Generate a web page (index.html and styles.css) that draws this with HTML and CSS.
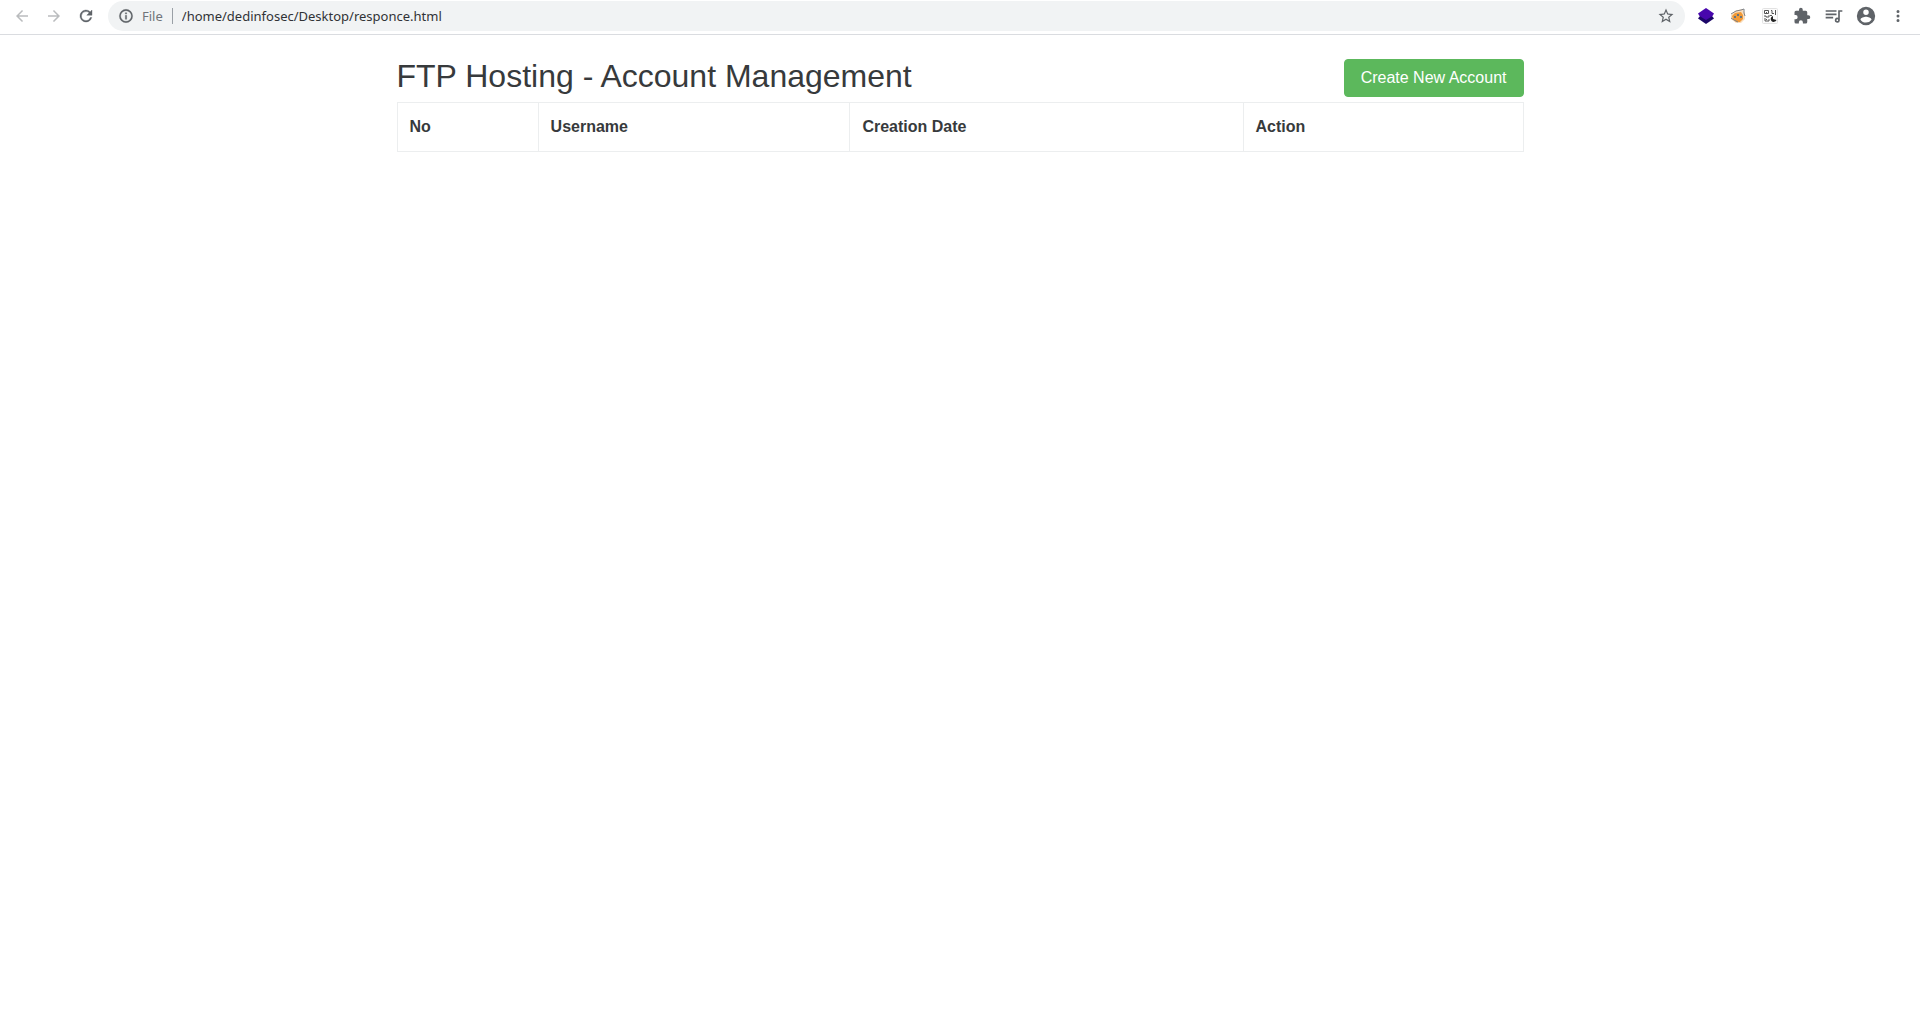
FILE: index.html
```html
<!DOCTYPE html>
<html lang="en">
<head>
<meta charset="utf-8">
<title>FTP Hosting - Account Management</title>
<link rel="stylesheet" href="styles.css">
</head>
<body>
<header class="toolbar">
  <nav class="nav-buttons" aria-label="Navigation">
    <button class="icon-button faded" type="button" aria-label="Back"><svg viewBox="0 0 24 24"><path d="M20 11H7.83l5.59-5.59L12 4l-8 8 8 8 1.41-1.41L7.83 13H20z"/></svg></button>
    <button class="icon-button faded" type="button" aria-label="Forward"><svg viewBox="0 0 24 24"><path d="M12 4l-1.41 1.41L16.17 11H4v2h12.17l-5.58 5.59L12 20l8-8z"/></svg></button>
    <button class="icon-button" type="button" aria-label="Reload"><svg viewBox="0 0 24 24"><path d="M17.65 6.35A8 8 0 1 0 19.73 14h-2.08A6 6 0 1 1 12 6c1.66 0 3.14.69 4.22 1.78L13 11h7V4z" stroke="#5f6368" stroke-width=".5"/></svg></button>
  </nav>
  <form class="omnibox">
    <svg class="info" viewBox="0 0 24 24"><path stroke="#5f6368" stroke-width=".5" d="M11 17h2v-6h-2zm1-15a10 10 0 1 0 0 20 10 10 0 0 0 0-20zm0 18a8 8 0 1 1 0-16 8 8 0 0 1 0 16zM11 9h2V7h-2z"/></svg>
    <label class="scheme" for="address">File</label>
    <input class="address" id="address" type="text" value="/home/dedinfosec/Desktop/responce.html" spellcheck="false">
    <button class="icon-button" type="button" aria-label="Bookmark"><svg viewBox="0 0 24 24"><path d="M22 9.24l-7.19-.62L12 2 9.19 8.63 2 9.24l5.46 4.73L5.82 21 12 17.27 18.18 21l-1.63-7.03zM12 15.4l-3.76 2.27 1-4.28-3.32-2.88 4.38-.38L12 6.1l1.71 4.04 4.38.38-3.32 2.88 1 4.28z"/></svg></button>
  </form>
  <div class="extensions">
    <button class="icon-button" type="button" aria-label="Layers extension"><svg viewBox="0 0 18 18"><path fill="#1c0668" d="M1 11.500l2-2.500h12l2 2.500L9 17z"/><path fill="#4806ad" d="M1 6.500L9 1l8 5.500L15.500 9 9 13 2.500 9z"/></svg></button>
    <button class="icon-button" type="button" aria-label="Proxy extension"><svg viewBox="0 0 18 18"><path fill="#f8ddbd" d="M2 8l4-4 7-2 3 4v6l-4 4H7l-5-4z"/><path fill="#f39a36" d="M3 9l3-3 6-1 2 3v4l-3 3H7l-3-3z"/><path fill="none" stroke="#7f8286" d="M2 7l5-3 5-1 3-1v4l1 3M2 11l3 2 4 2"/><path fill="#69747b" d="M8 7h2v2H8zM5 9h2v2H5zM11 9h2v2h-2z"/></svg></button>
    <button class="icon-button" type="button" aria-label="QR code extension"><svg viewBox="0 0 18 18"><rect x="1.500" y="1.500" width="15" height="15" rx="1" fill="#fbfbfb" stroke="#e2e2e2"/><path fill="none" stroke="#555" d="M3.500 3.500h4v3h-4zM10 3.500h1v3h2M14.500 3v5M3 9h2v1h3V8M4 11v3h4v-2"/><path fill="#555" d="M5 12h1v1H5zM5 5h1v1H5zM9 8h2v1H9z"/><path fill="#222" d="M12 9a3 3 0 1 0 3.500 4L12 12z"/></svg></button>
    <button class="icon-button" type="button" aria-label="Extensions"><svg viewBox="0 0 24 24"><path d="M20.500 11H19V7a2 2 0 0 0-2-2h-4V3.500a2.500 2.500 0 0 0-5 0V5H4a2 2 0 0 0-1.990 2v3.800H3.500a2.700 2.700 0 0 1 0 5.400H2V20a2 2 0 0 0 2 2h3.800v-1.500a2.700 2.700 0 0 1 5.400 0V22H17a2 2 0 0 0 2-2v-4h1.500a2.500 2.500 0 0 0 0-5z"/></svg></button>
    <button class="icon-button wide" type="button" aria-label="Media controls"><svg viewBox="0 0 24 24"><path d="M15 5H2v2h13zM15 9H2v2h13zM2 15h9v-2H2zM17 5v9.180A3 3 0 1 0 19 17V7h3V5zM16 18a1 1 0 1 1 0-2 1 1 0 0 1 0 2z"/></svg></button>
    <button class="icon-button profile" type="button" aria-label="Profile"><svg viewBox="0 0 24 24"><path d="M12 2a10 10 0 1 0 0 20 10 10 0 0 0 0-20zm0 3a3 3 0 1 1 0 6 3 3 0 0 1 0-6zm0 14.200a7.200 7.200 0 0 1-6-3.220c.03-1.990 4-3.080 6-3.080s5.970 1.090 6 3.080a7.200 7.200 0 0 1-6 3.220z"/></svg></button>
    <button class="icon-button" type="button" aria-label="Menu"><svg viewBox="0 0 24 24"><path d="M12 8a2 2 0 1 0 0-4 2 2 0 0 0 0 4zm0 2a2 2 0 1 0 0 4 2 2 0 0 0 0-4zm0 6a2 2 0 1 0 0 4 2 2 0 0 0 0-4z"/></svg></button>
  </div>
</header>
<main class="container">
  <div class="page-header">
    <h2 class="title">FTP Hosting - Account Management</h2>
    <a class="btn-success" href="#">Create New Account</a>
  </div>
  <table class="accounts">
    <thead>
      <tr><th scope="col">No</th><th scope="col">Username</th><th scope="col">Creation Date</th><th class="action" scope="col">Action</th></tr>
    </thead>
  </table>
</main>
</body>
</html>
```
FILE: styles.css
```css
* { box-sizing: border-box; }

body {
  margin: 0;
  background: #fff;
  color: #373a3c;
  font: 16px/24px "Liberation Sans", Arial, sans-serif;
}

.toolbar {
  display: flex;
  align-items: center;
  height: 35px;
  padding: 0 12px 3px;
  border-bottom: 1px solid #dadce0;
}

.nav-buttons,
.extensions {
  display: flex;
  align-items: center;
}

.nav-buttons { gap: 12px; }

.icon-button {
  display: flex;
  align-items: center;
  justify-content: center;
  width: 20px;
  height: 20px;
  padding: 0;
  border: 0;
  background: none;
}

.icon-button svg {
  flex: none;
  width: 18px;
  height: 18px;
  fill: #5f6368;
}

.icon-button.faded svg { fill: #babcbe; }

.omnibox {
  display: flex;
  flex: 1;
  align-items: center;
  height: 30px;
  margin: 0 11px 0 12px;
  padding: 0 9px 0 10px;
  border-radius: 15px;
  background: #f1f3f4;
  font: 13px/20px "Noto Sans", sans-serif;
}

.info {
  width: 16px;
  height: 16px;
  fill: #5f6368;
}

.scheme {
  margin-left: 8px;
  padding-right: 9px;
  border-right: 1px solid #9aa0a6;
  color: #70757a;
  line-height: 16px;
}

.address {
  flex: 1;
  min-width: 0;
  padding: 0 9px;
  border: 0;
  outline: 0;
  background: none;
  color: #303236;
  font: inherit;
}

.extensions { gap: 12px; }

.icon-button.wide svg {
  width: 20px;
  height: 20px;
}

.icon-button.profile svg {
  width: 22px;
  height: 22px;
}

.container {
  max-width: 1157px;
  margin: 0 auto;
  padding: 24px 15px;
}

.page-header {
  display: flex;
  justify-content: space-between;
  height: 43px;
}

.title {
  margin: 0;
  font-size: 32px;
  font-weight: 400;
  line-height: 35px;
}

.btn-success {
  height: 38px;
  padding: 6px 16px;
  border: 1px solid #5cb85c;
  border-radius: 4px;
  background: #5cb85c;
  color: #fff;
  text-decoration: none;
}

.accounts {
  width: 100%;
  border-collapse: collapse;
}

.accounts th {
  padding: 12px;
  border: 1px solid #eceeef;
  text-align: left;
}

.accounts .action { width: 280px; }
```
